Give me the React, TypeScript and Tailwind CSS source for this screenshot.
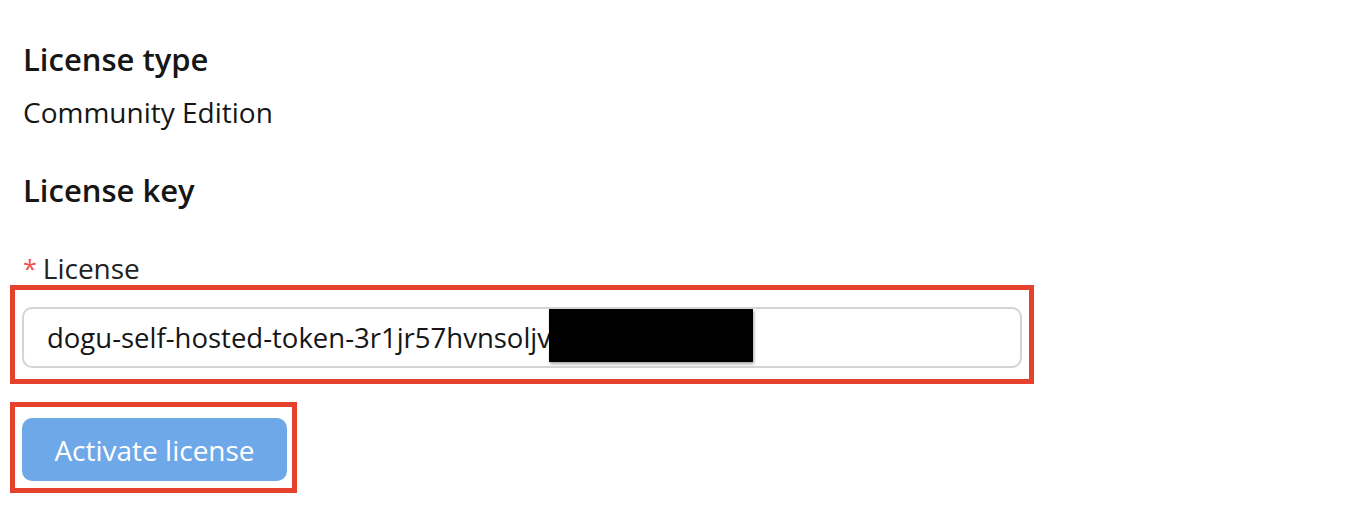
import React from 'react';

const font = { fontFamily: '"Open Sans", "Noto Sans", sans-serif' };

const LicenseSettings: React.FC = () => {
    return (
        <div className="min-h-[510px] w-[1352px] bg-white text-[#161616]" style={font}>
            <div className="pl-[10px] pt-[39px]">
                <h2 className="pl-[13px] text-[31px] font-semibold leading-[40px]">License type</h2>
                <p className="mt-[15px] pl-[13px] text-[28px] leading-[36px]">Community Edition</p>

                <h2 className="mt-[40px] pl-[13px] text-[31px] font-semibold leading-[40px]">License key</h2>

                <div className="mt-[41px] flex items-center pl-[13px] text-[28px] leading-[34px]">
                    <span className="mr-[6px] text-[25px] text-[#f0504c]">*</span>
                    <span className="text-[#222]">License</span>
                </div>

                <div className="w-[1024px] border-[5px] border-[#e5412d] pb-[11px] pl-[7px] pr-[7px] pt-[17px]">
                    <div className="relative flex h-[61px] items-center overflow-hidden rounded-[10px] border-2 border-[#d4d4d4] pl-[23px] text-[27.5px]">
                        <span className="whitespace-nowrap">dogu-self-hosted-token-3r1jr57hvnsoljv</span>
                        <div className="absolute left-[525px] top-0 h-[53px] w-[204px] bg-black shadow-[1px_2px_3px_rgba(0,0,0,0.35)]" />
                    </div>
                </div>

                <div className="mt-[18px] inline-block border-[5px] border-[#e5412d] pb-[7px] pl-[7px] pr-[5px] pt-[11px]">
                    <button className="flex h-[63px] w-[265px] items-center justify-center rounded-[10px] bg-[#6fa8e8] text-[28px] text-white">
                        Activate license
                    </button>
                </div>
            </div>
        </div>
    );
};

export default function App() {
    return <LicenseSettings />;
}
